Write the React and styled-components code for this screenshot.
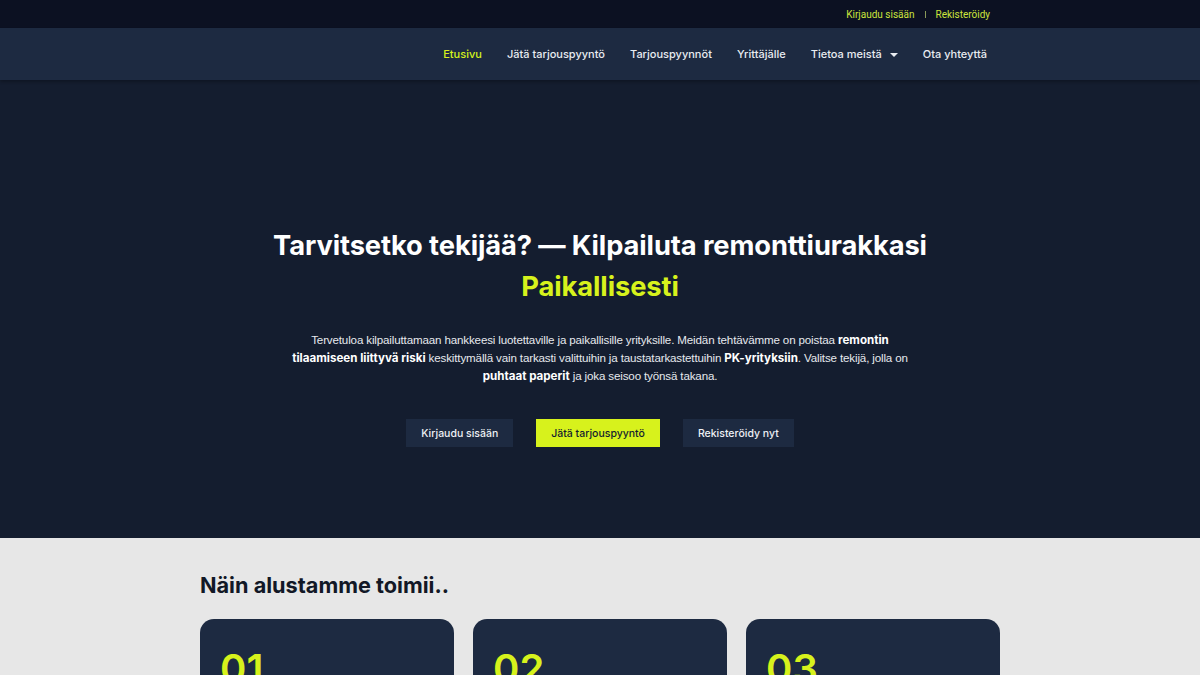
import React from "react";
import styled, { createGlobalStyle } from "styled-components";

const GlobalStyle = createGlobalStyle`
  html, body {
    margin: 0;
    padding: 0;
    background: #e7e7e7;
  }
  * {
    box-sizing: border-box;
  }
`;

const accent = "#d7f21c";
const heading = `"Inter", "Noto Sans", sans-serif`;
const body = `"Roboto", "Liberation Sans", Arial, sans-serif`;

const TopBar = styled.div`
  height: 28px;
  background: #0c1122;
  display: flex;
  justify-content: flex-end;
  align-items: center;
  padding-right: 210px;
  gap: 10px;
  font-family: ${body};
  font-size: 10px;
  color: #cde43c;
`;

const TopLink = styled.a`
  color: inherit;
  text-decoration: none;
`;

const Sep = styled.span`
  width: 1px;
  height: 7px;
  background: #8a9a5a;
`;

const Nav = styled.nav`
  height: 52px;
  background: #1d2a41;
  display: flex;
  justify-content: flex-end;
  align-items: center;
  padding-right: 213px;
  gap: 25px;
  box-shadow: 0 2px 3px rgba(0, 0, 0, 0.25);
  position: relative;
  z-index: 1;
`;

const NavLink = styled.a`
  font-family: ${heading};
  font-size: 11px;
  font-weight: 500;
  color: ${(p) => (p.$active ? accent : "#e9ecf1")};
  text-decoration: none;
  display: flex;
  align-items: center;
  gap: 8px;
`;

const Caret = styled.span`
  width: 0;
  height: 0;
  border-left: 4px solid transparent;
  border-right: 4px solid transparent;
  border-top: 4px solid #e9ecf1;
  margin-top: 2px;
`;

const Hero = styled.section`
  height: 458px;
  background: #141d2f;
  display: flex;
  flex-direction: column;
  align-items: center;
  padding-top: 145px;
`;

const Title = styled.h1`
  margin: 0;
  font-family: ${heading};
  font-size: 27.3px;
  font-weight: 700;
  line-height: 41px;
  color: #ffffff;
  text-align: center;
  letter-spacing: -0.1px;
`;

const Accent = styled.span`
  color: ${accent};
`;

const Lead = styled.p`
  margin: 24px 0 0;
  width: 620px;
  font-family: "Liberation Sans", Arial, sans-serif;
  font-size: 11.6px;
  letter-spacing: -0.15px;
  line-height: 18px;
  color: #e6e9ee;
  text-align: center;

  b {
    color: #ffffff;
    font-family: ${heading};
    font-weight: 700;
    letter-spacing: 0;
  }
`;

const Buttons = styled.div`
  margin-top: 34px;
  display: flex;
  gap: 23px;
`;

const Button = styled.a`
  height: 28px;
  padding: 0 15px;
  display: flex;
  align-items: center;
  font-family: ${heading};
  font-size: 10.5px;
  font-weight: 500;
  text-decoration: none;
  background: ${(p) => (p.$primary ? accent : "#1d2a41")};
  color: ${(p) => (p.$primary ? "#141d2f" : "#eef1f5")};
`;

const Steps = styled.section`
  width: 800px;
  margin: 0 auto;
  padding-top: 34px;
`;

const StepsTitle = styled.h2`
  margin: 0;
  font-family: ${heading};
  font-size: 21.7px;
  font-weight: 700;
  color: #121826;
`;

const Cards = styled.div`
  margin-top: 21px;
  display: grid;
  grid-template-columns: repeat(3, 1fr);
  gap: 19px;
`;

const Card = styled.div`
  height: 200px;
  background: #1d2a41;
  border-radius: 14px;
  padding: 30px 20px;
`;

const Num = styled.div`
  font-family: ${heading};
  font-size: 40px;
  font-weight: 600;
  color: ${accent};
  line-height: 1;
`;

const navItems = [
  "Etusivu",
  "Jätä tarjouspyyntö",
  "Tarjouspyynnöt",
  "Yrittäjälle",
  "Tietoa meistä",
  "Ota yhteyttä",
];

export default function App() {
  return (
    <>
      <GlobalStyle />
      <TopBar>
        <TopLink href="#">Kirjaudu sisään</TopLink>
        <Sep />
        <TopLink href="#">Rekisteröidy</TopLink>
      </TopBar>
      <Nav>
        {navItems.map((item, i) => (
          <NavLink href="#" key={item} $active={i === 0}>
            {item}
            {item === "Tietoa meistä" && <Caret />}
          </NavLink>
        ))}
      </Nav>
      <Hero>
        <Title>
          Tarvitsetko tekijää? — Kilpailuta remonttiurakkasi
          <br />
          <Accent>Paikallisesti</Accent>
        </Title>
        <Lead>
          Tervetuloa kilpailuttamaan hankkeesi luotettaville ja paikallisille
          yrityksille. Meidän tehtävämme on poistaa{" "}
          <b>remontin tilaamiseen liittyvä riski</b> keskittymällä vain
          tarkasti valittuihin ja taustatarkastettuihin <b>PK-yrityksiin</b>.
          Valitse tekijä, jolla on <b>puhtaat paperit</b> ja joka seisoo
          työnsä takana.
        </Lead>
        <Buttons>
          <Button href="#">Kirjaudu sisään</Button>
          <Button href="#" $primary>
            Jätä tarjouspyyntö
          </Button>
          <Button href="#">Rekisteröidy nyt</Button>
        </Buttons>
      </Hero>
      <Steps>
        <StepsTitle>Näin alustamme toimii..</StepsTitle>
        <Cards>
          {["01", "02", "03"].map((n) => (
            <Card key={n}>
              <Num>{n}</Num>
            </Card>
          ))}
        </Cards>
      </Steps>
    </>
  );
}
